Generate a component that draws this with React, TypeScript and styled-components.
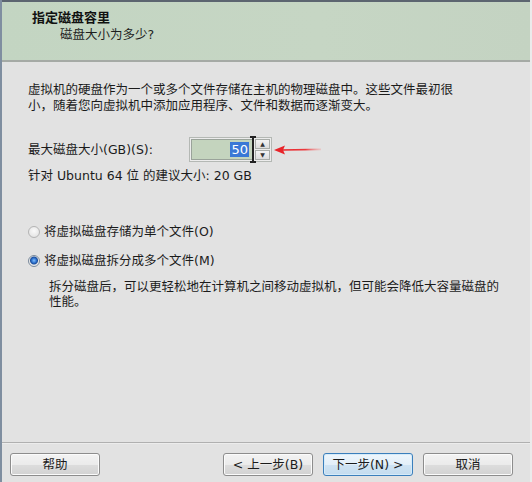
import React from "react";
import styled, { createGlobalStyle } from "styled-components";

const FONT = `"DejaVu Sans", "Noto Sans CJK SC", sans-serif`;

const Global = createGlobalStyle`
  html, body { margin: 0; padding: 0; background: #e2e2e2; }
  body { font-family: ${FONT}; }
  * { box-sizing: border-box; }
`;

const Frame = styled.div`
  width: 532px;
  height: 482px;
  display: flex;
  flex-direction: column;
  background: #e2e2e2;
  border-left: 2px solid #7f8ea0;
  border-right: 2px solid #ebebeb;
  color: #1b1b1b;
  font-size: 12.5px;
  overflow: hidden;
`;

const Header = styled.div`
  height: 62px;
  flex: none;
  background: linear-gradient(90deg, #c3d5c2 0%, #c6d6c4 60%, #c4d3c2 100%);
  border-top: 2px solid #5c6570;
  border-bottom: 2px solid #a5aaa5;
  padding: 8px 0 0 30px;
`;

const Title = styled.div`
  font-weight: bold;
  font-size: 13px;
  line-height: 16px;
  color: #111;
`;

const Subtitle = styled.div`
  margin: 1px 0 0 28px;
  line-height: 16px;
  color: #1e1e1e;
`;

const Body = styled.div`
  flex: 1;
  padding: 20px 0 0 26px;
  display: flex;
  flex-direction: column;
`;

const Paragraph = styled.div`
  line-height: 16px;
`;

const SizeRow = styled.div`
  display: flex;
  align-items: center;
  margin-top: 22px;
  height: 27px;
`;

const Label = styled.span`
  width: 161px;
  line-height: 16px;
`;

const SpinBox = styled.div`
  position: relative;
  display: flex;
  align-items: stretch;
  width: 83px;
  height: 25px;
  border: 1px solid #b4b8b4;
  background: #ececec;
  padding: 1px;
`;

const Field = styled.div`
  flex: 1;
  background: #c4d4be;
  border: 1px solid #9aa39a;
  display: flex;
  align-items: center;
  justify-content: flex-end;
  padding-right: 3px;
`;

const Selected = styled.span`
  background: #3a78d6;
  color: #fff;
  font-size: 13px;
  line-height: 15px;
  padding: 0 1px;
`;

const Caret = styled.div`
  position: absolute;
  left: 62px;
  top: -2px;
  width: 2px;
  height: 27px;
  background: #222;
  &::before, &::after {
    content: "";
    position: absolute;
    left: -2px;
    width: 6px;
    height: 2px;
    background: #222;
  }
  &::before { top: 0; }
  &::after { bottom: 0; }
`;

const Spinner = styled.div`
  width: 15px;
  margin-left: 2px;
  display: flex;
  flex-direction: column;
  gap: 1px;
`;

const SpinButton = styled.div`
  flex: 1;
  border: 1px solid #a8aca8;
  background: linear-gradient(#f4f4f4, #dcdcdc);
  display: flex;
  align-items: center;
  justify-content: center;
  font-size: 6px;
  color: #333;
  line-height: 1;
`;

const Arrow = styled.svg`
  margin-left: 2px;
  flex: none;
`;

const Recommend = styled.div`
  margin-top: 5px;
  line-height: 16px;
`;

const RadioRow = styled.label<{ $first?: boolean }>`
  display: flex;
  align-items: center;
  gap: 4px;
  height: 16px;
  margin-top: ${(p) => (p.$first ? "40px" : "13px")};
  line-height: 16px;
`;

const RadioDot = styled.span<{ $checked?: boolean }>`
  width: 12px;
  height: 12px;
  border-radius: 50%;
  border: 1px solid ${(p) => (p.$checked ? "#7a8a9c" : "#b4b4b4")};
  background: ${(p) =>
    p.$checked
      ? "radial-gradient(circle at 50% 45%, #7fc0ff 0, #2a6cc8 2.5px, #1c4e9a 3.5px, #e8e8e8 4.5px, #f6f6f6 100%)"
      : "radial-gradient(circle at 50% 40%, #fafafa 0, #e6e6e6 70%, #d2d2d2 100%)"};
  flex: none;
`;

const Description = styled.div`
  margin: 10px 0 0 21px;
  line-height: 15px;
`;

const Separator = styled.div`
  height: 2px;
  border-top: 1px solid #b0b0b0;
  border-bottom: 1px solid #ececec;
  flex: none;
`;

const Footer = styled.div`
  display: flex;
  gap: 10px;
  padding: 9px 17px 6px 8px;
  flex: none;
`;

const Spacer = styled.div`
  flex: 1;
`;

const Button = styled.button<{ $focused?: boolean }>`
  width: 90px;
  height: 23px;
  border-radius: 3px;
  border: 1px solid ${(p) => (p.$focused ? "#3b7fbc" : "#8d8d8d")};
  background: ${(p) =>
    p.$focused
      ? "linear-gradient(#eef6fc 0%, #e3eff9 50%, #cfe3f3 51%, #c4dcef 100%)"
      : "linear-gradient(#f3f3f3 0%, #ebebeb 50%, #dddddd 51%, #d2d2d2 100%)"};
  box-shadow: inset 0 0 0 1px ${(p) => (p.$focused ? "#d6ebf9" : "#fbfbfb")};
  font-family: ${FONT};
  font-size: 12.5px;
  color: #1b1b1b;
  padding: 0;
  line-height: 20px;
`;

export default function App() {
  return (
    <>
      <Global />
      <Frame>
        <Header>
          <Title>指定磁盘容里</Title>
          <Subtitle>磁盘大小为多少?</Subtitle>
        </Header>
        <Body>
          <Paragraph>
            虚拟机的硬盘作为一个或多个文件存储在主机的物理磁盘中。这些文件最初很
            <br />
            小，随着您向虚拟机中添加应用程序、文件和数据而逐渐变大。
          </Paragraph>
          <SizeRow>
            <Label>最大磁盘大小(GB)(S):</Label>
            <SpinBox>
              <Field>
                <Selected>50</Selected>
              </Field>
              <Spinner>
                <SpinButton>▲</SpinButton>
                <SpinButton>▼</SpinButton>
              </Spinner>
              <Caret />
            </SpinBox>
            <Arrow width="48" height="10" viewBox="0 0 48 10">
              <defs>
                <linearGradient id="tail" x1="0" x2="1" y1="0" y2="0">
                  <stop offset="0" stopColor="#e8242a" />
                  <stop offset="0.6" stopColor="#ec3a3e" />
                  <stop offset="1" stopColor="#f2a0a0" stopOpacity="0.4" />
                </linearGradient>
              </defs>
              <path d="M8 4.2 L47 3.6 L47 5.2 L8 5.8 Z" fill="url(#tail)" />
              <path d="M0 5 L11 0.6 L9 5 L11 9.4 Z" fill="#e8242a" />
            </Arrow>
          </SizeRow>
          <Recommend>针对 Ubuntu 64 位 的建议大小: 20 GB</Recommend>
          <RadioRow $first>
            <RadioDot />
            将虚拟磁盘存储为单个文件(O)
          </RadioRow>
          <RadioRow>
            <RadioDot $checked />
            将虚拟磁盘拆分成多个文件(M)
          </RadioRow>
          <Description>
            拆分磁盘后，可以更轻松地在计算机之间移动虚拟机，但可能会降低大容量磁盘的
            <br />
            性能。
          </Description>
        </Body>
        <Separator />
        <Footer>
          <Button>帮助</Button>
          <Spacer />
          <Button>&lt; 上一步(B)</Button>
          <Button $focused>下一步(N) &gt;</Button>
          <Button>取消</Button>
        </Footer>
      </Frame>
    </>
  );
}
